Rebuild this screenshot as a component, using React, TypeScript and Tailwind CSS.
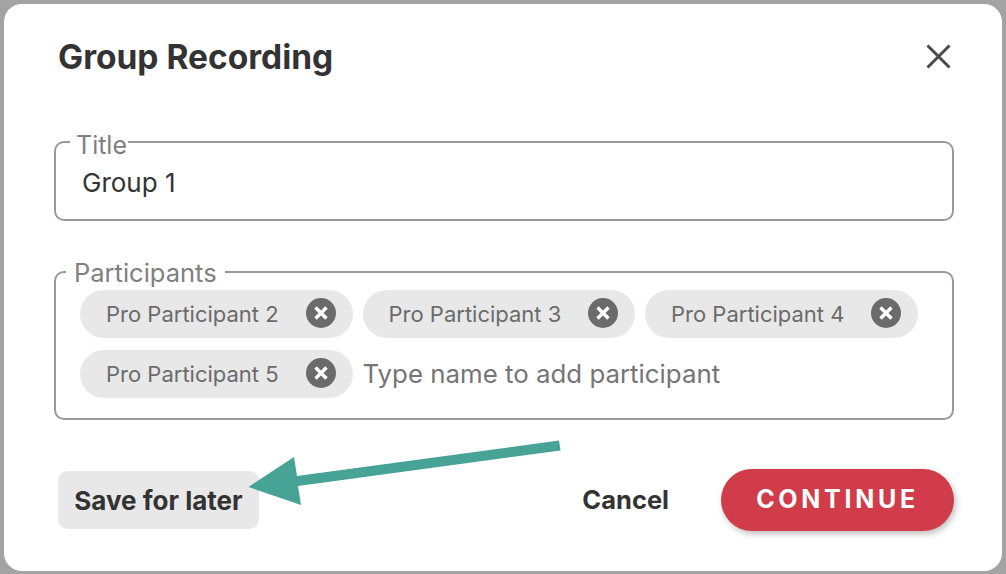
const font = "font-['Inter','Noto_Sans',sans-serif]";

function Chip({ name }: { name: string }) {
  return (
    <div className="flex h-[47.5px] w-[272.5px] items-center justify-between rounded-full bg-[#e8e8e8] pl-[26px] pr-[17px]">
      <span className="text-[22px] leading-none text-[#6b6b6b]">{name}</span>
      <svg className="mb-[2px]" width="30" height="30" viewBox="0 0 30 30">
        <circle cx="15" cy="15" r="15" fill="#6b6b6b" />
        <path d="M9.5 9.5 20.5 20.5M20.5 9.5 9.5 20.5" stroke="#fff" strokeWidth="3.4" />
      </svg>
    </div>
  );
}

export default function App() {
  return (
    <div className={`${font} relative flex h-[574px] w-[1006px] flex-col overflow-hidden bg-[#a3a3a3] pt-[4px] pb-[3px] pl-[4px] pr-[4px]`}>
      <div className="flex flex-1 flex-col rounded-[18px] bg-white pl-[50px] pr-[48px]">
        <div className="mt-[31px] flex h-[42px] items-center justify-between">
          <h1 className="pl-[4px] pt-[3px] text-[33.5px] font-bold leading-none text-[#333333]">Group Recording</h1>
          <svg className="mr-[3px]" width="25" height="25" viewBox="0 0 25 25">
            <path d="M1.5 1.5 23.5 23.5M23.5 1.5 1.5 23.5" stroke="#4a4a4a" strokeWidth="3" />
          </svg>
        </div>

        <fieldset className="mt-[49px] h-[95px] rounded-[10px] border-2 border-[#999999] pl-[26px]">
          <legend className="ml-[-12px] pl-[6px] pr-[1px] pt-[6px] text-[25px] leading-[26px] text-[#808080]">Title</legend>
          <div className="pt-[9px] text-[26px] leading-[32px] text-[#333333]">Group 1</div>
        </fieldset>

        <fieldset className="mt-[37px] h-[162px] rounded-[10px] border-2 border-[#999999] pl-[24px]">
          <legend className="ml-[-14px] px-[8px] pt-[2px] text-[25.5px] leading-[26px] text-[#808080]">Participants</legend>
          <div className="flex flex-wrap gap-x-[10px] gap-y-[12.5px] pt-[4px]">
            <Chip name="Pro Participant 2" />
            <Chip name="Pro Participant 3" />
            <Chip name="Pro Participant 4" />
            <Chip name="Pro Participant 5" />
            <div className="flex h-[47.5px] items-center text-[25.85px] leading-none text-[#757575]">Type name to add participant</div>
          </div>
        </fieldset>

        <div className="mt-[49px] flex items-center justify-between">
          <button className="ml-[4px] h-[58px] w-[201px] rounded-[10px] bg-[#e8e8e8] text-[26px] font-bold text-[#333333]">Save for later</button>
          <div className="flex items-center gap-[52px]">
            <button className="text-[25.5px] font-bold text-[#333333]">Cancel</button>
            <button className="h-[62px] w-[233px] rounded-full bg-[#d13c4a] text-[25px] font-bold tracking-[3.7px] text-white shadow-[2px_3px_6px_rgba(0,0,0,0.25)]">CONTINUE</button>
          </div>
        </div>
      </div>

      <svg className="absolute left-0 top-0" width="1006" height="574" viewBox="0 0 1006 574">
        <polygon points="248.5,487 294,457 297,476 559,440.5 560.5,450.5 298,486 301,505" fill="#48a397" />
      </svg>
    </div>
  );
}
